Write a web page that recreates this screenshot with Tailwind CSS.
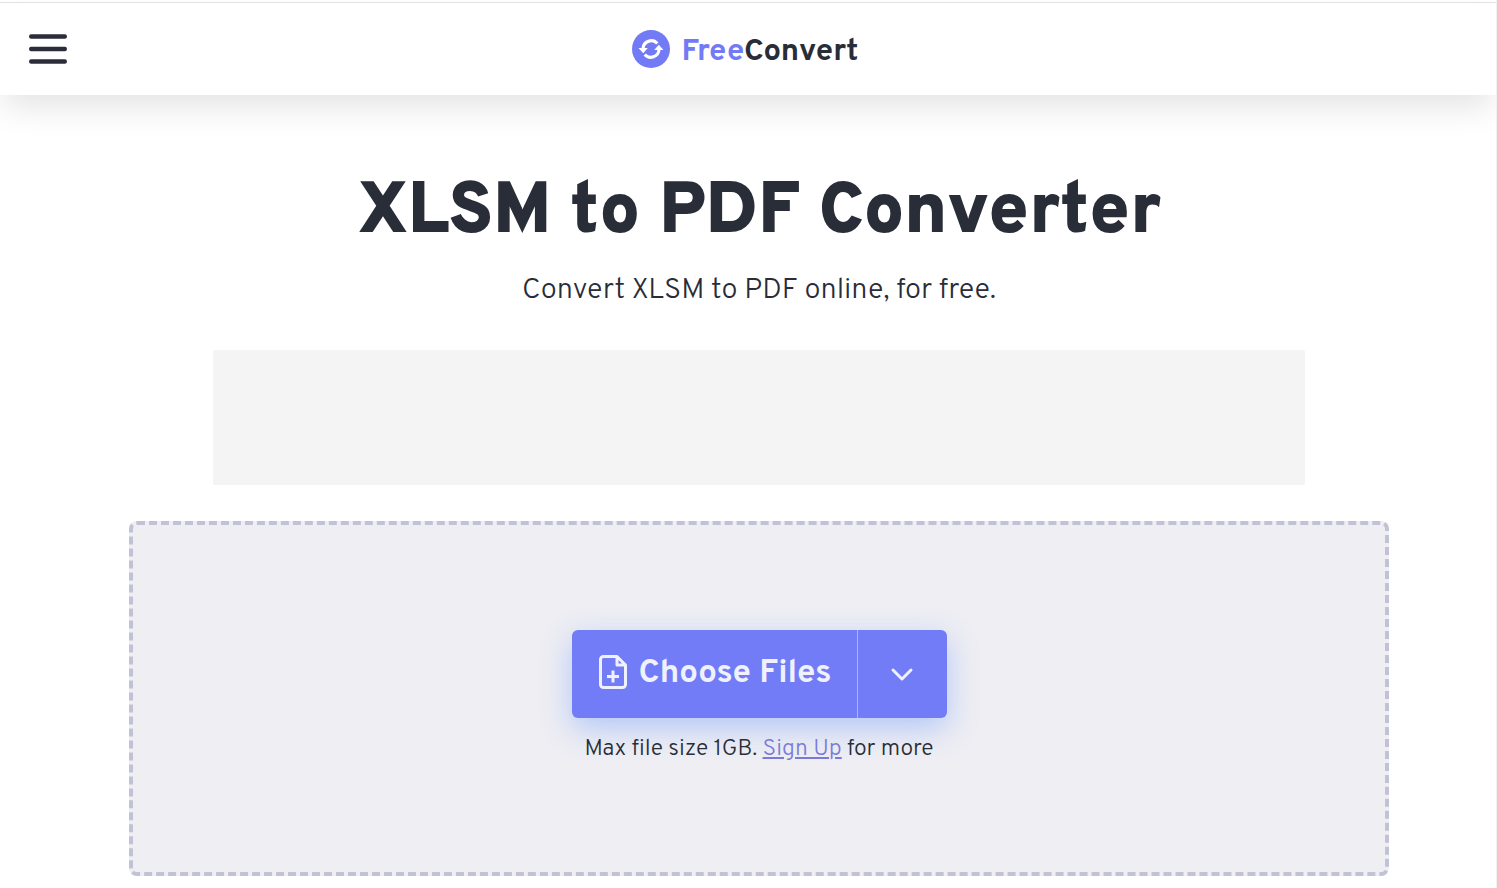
<!DOCTYPE html>
<html lang="en">

<head>
  <meta charset="UTF-8">
  <meta name="viewport" content="width=device-width, initial-scale=1.0">
  <title>XLSM to PDF Converter | FreeConvert</title>
  <script src="https://cdn.jsdelivr.net/npm/@tailwindcss/browser@4"></script>
</head>

<body class="min-h-screen bg-white border-r border-[#f0f0f0] font-[Overpass,Roboto,sans-serif] text-[#282d38] overflow-x-hidden">
  <!-- Header -->
  <header class="mt-0.5 h-[93px] border-t border-[#e2e2e2] bg-white shadow-[0_16px_32px_-4px_rgba(0,0,0,0.11)] grid grid-cols-[1fr_auto_1fr] items-center">
    <button type="button" aria-label="Open menu" class="ml-7 w-10 cursor-pointer">
      <svg class="w-10 h-8" viewBox="0 0 40 32" fill="none" stroke="#2b2c39" stroke-width="4.4" stroke-linecap="round">
        <path d="M3.200 3.500h33.600M3.200 16h33.600M3.200 28.500h33.600" />
      </svg>
    </button>
    <a href="#" class="flex items-center gap-3 text-[31px] font-bold mr-1.5">
      <svg class="w-[38px] h-[38px]" viewBox="0 0 38 38" aria-hidden="true">
        <circle cx="19" cy="19" r="19" fill="#727af5" />
        <g fill="none" stroke="#fff" stroke-width="3.2">
          <path d="M11 18.500A8.200 8.200 0 0 1 25.300 13.500" />
          <path d="M27 19.500A8.200 8.200 0 0 1 12.700 24.500" />
        </g>
        <path d="M6.500 18h9.300l-4.600 5.200zM31.500 20h-9.300l4.600-5.200z" fill="#fff" />
      </svg>
      <span class="pt-2"><span class="text-[#727af5]">Free</span>Convert</span>
    </a>
  </header>

  <main class="pl-[22px] flex flex-col items-center">
    <h1 class="mt-[79px] text-[72px] leading-[80px] font-black text-center">XLSM to PDF Converter</h1>
    <p class="mt-[17px] text-[29px] leading-10 font-light text-center">Convert XLSM to PDF online, for free.</p>

    <!-- Ad slot -->
    <div class="mt-[39px] w-full max-w-[1092px] h-[135px] rounded-xs bg-[#f4f4f4]"></div>

    <!-- Upload area -->
    <section class="mt-9 mb-3 w-full max-w-[1260px] rounded-lg border-4 border-dashed border-[#c1c2d5] bg-[#eeeef3] pt-[105px] pb-[106px] flex flex-col items-center">
      <div class="flex h-[88px] rounded-md bg-[#727cf6] text-[#f0f1fe] shadow-[0_10px_30px_rgba(90,140,255,0.4)]">
        <button type="button" class="w-[285px] pb-1 pl-0.5 flex items-center justify-center gap-3 text-[33px] font-bold cursor-pointer">
          <svg class="w-7 h-[34px]" viewBox="0 0 28 34" fill="none" stroke="currentColor" stroke-width="3" stroke-linejoin="round" aria-hidden="true">
            <path d="M18 1.500H4.500a3 3 0 0 0-3 3v25a3 3 0 0 0 3 3h19a3 3 0 0 0 3-3V10zM18 1.500V10h8.500" />
            <path d="M14 15.500v12M8 21.500h12" />
          </svg>
          <span class="pt-1.5">Choose Files</span>
        </button>
        <button type="button" aria-label="More sources" class="w-[90px] border-l border-[#aeb4fb] flex items-center justify-center cursor-pointer">
          <svg class="w-6 h-4" viewBox="0 0 24 16" fill="none" stroke="currentColor" stroke-width="3" stroke-linecap="round" stroke-linejoin="round">
            <path d="M3 4l9 9 9-9" />
          </svg>
        </button>
      </div>
      <p class="mt-4 text-[23px] leading-8 font-light">Max file size 1GB. <a href="#" class="text-[#7a7bd8] underline">Sign Up</a> for more</p>
    </section>
  </main>
</body>

</html>
